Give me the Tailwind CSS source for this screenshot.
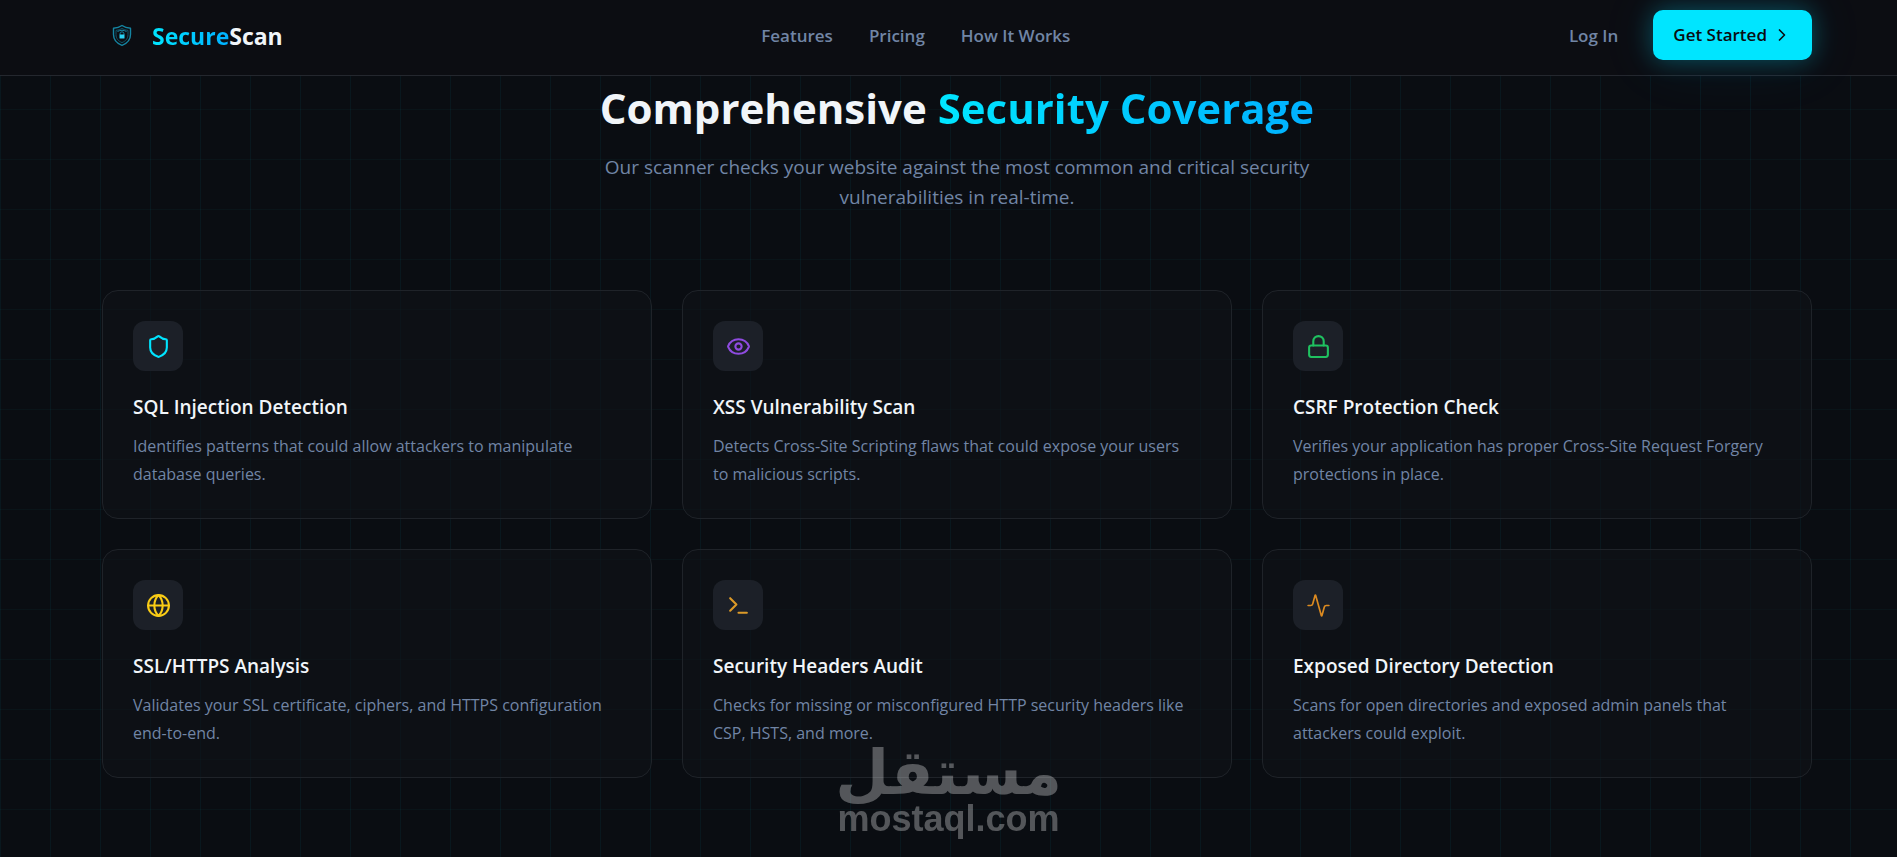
<!DOCTYPE html>
<html lang="en">
<head>
  <meta charset="UTF-8">
  <meta name="viewport" content="width=device-width, initial-scale=1.0" />
  <title>SecureScan</title>
  <!-- Tailwind CSS -->
  <script src="https://cdn.jsdelivr.net/npm/@tailwindcss/browser@4"></script>
</head>
<body class="relative min-h-screen overflow-x-hidden bg-[#0a0d12] bg-[linear-gradient(to_right,#00e5ff0d_1px,transparent_1px),linear-gradient(to_bottom,#00e5ff08_1px,transparent_1px)] bg-[size:50px_50px] bg-[position:0_9px] font-['Open_Sans',sans-serif] text-[#f1f5f9]">

<!-- Top bar -->
<header class="relative flex items-center justify-between border-b border-[#24272e] bg-[#0c0d12] pt-[10px] pr-[85px] pb-[13px] pl-[102px]">
  <a href="#" class="flex items-center gap-[10px] text-[23px] font-bold">
    <svg class="size-10" viewBox="0 0 40 40" fill="none" stroke="#1585a3" stroke-width="1.4" stroke-linejoin="round">
      <path d="M20 9.500c2.400 1.700 5.200 2.500 8.500 2.700v6.300c0 5.200-3.200 8.800-8.500 10.800-5.300-2-8.500-5.600-8.500-10.800v-6.300c3.300-.2 6.100-1 8.500-2.700z"/>
      <path d="M20 12.500c1.800 1.100 3.700 1.700 6 1.900v4.300c0 3.700-2.200 6.300-6 7.900-3.800-1.600-6-4.200-6-7.900v-4.300c2.300-.2 4.200-.8 6-1.900z" stroke="#0f566b" stroke-width="1"/>
      <path d="M15.500 15.500c2.800-1.600 6.200-1.600 9 0M18 19v-1.200a2 2 0 0 1 4 0V19" stroke-width="1"/>
      <rect x="17.500" y="18.500" width="5" height="4" rx=".6" fill="#2bd4f5" stroke="none"/>
    </svg>
    <span><span class="bg-gradient-to-r from-[#00e5ff] to-[#00b0ff] bg-clip-text text-transparent">Secure</span>Scan</span>
  </a>

  <nav class="flex items-center gap-9 text-[17px] font-semibold text-[#7185a5]">
    <a href="#features">Features</a>
    <a href="#pricing">Pricing</a>
    <a href="#how">How It Works</a>
  </nav>

  <div class="flex h-[52px] items-center gap-[15px] text-[17px] font-semibold">
    <a href="#login" class="px-5 text-[#7185a5]">Log In</a>
    <button type="button" class="flex h-[50px] items-center gap-[5px] self-start rounded-[10px] bg-[#00e5ff] px-5 text-[#0a0d12] shadow-[0_0_25px_#00e5ff4d,0_0_60px_#00b0ff1a]">
      Get Started
      <svg class="size-5" viewBox="0 0 24 24" fill="none" stroke="currentColor" stroke-width="2" stroke-linecap="round" stroke-linejoin="round"><path d="m9 18 6-6-6-6"/></svg>
    </button>
  </div>
</header>

<!-- Features -->
<main id="features" class="pt-1 pr-[85px] pb-[78px] pl-[102px]">
  <div class="text-center">
    <h2 class="text-[42px] leading-[56px] font-bold">Comprehensive <span class="bg-gradient-to-r from-[#00e5ff] to-[#00b0ff] bg-clip-text text-transparent">Security Coverage</span></h2>
    <p class="mx-auto mt-4 max-w-[720px] text-[19px] leading-[30px] text-[#7185a5]">Our scanner checks your website against the most common and critical security vulnerabilities in real-time.</p>
  </div>

  <div class="mt-[78px] grid grid-cols-3 gap-[30px]">
    <article class="rounded-2xl border border-[#1f2329] bg-[#0f1217]/60 p-[30px]">
      <div class="flex size-[50px] items-center justify-center rounded-xl bg-[#1c2028] text-[#00e5ff]">
        <svg class="size-[25px]" viewBox="0 0 24 24" fill="none" stroke="currentColor" stroke-width="2" stroke-linecap="round" stroke-linejoin="round"><path d="M20 13c0 5-3.500 7.500-7.660 8.950a1 1 0 0 1-.67-.01C7.500 20.500 4 18 4 13V6a1 1 0 0 1 1-1c2 0 4.500-1.200 6.240-2.720a1.170 1.170 0 0 1 1.520 0C14.510 3.810 17 5 19 5a1 1 0 0 1 1 1z"/></svg>
      </div>
      <h3 class="mt-[21px] mb-[10px] text-[19px] leading-[30px] font-semibold">SQL Injection Detection</h3>
      <p class="pr-[10px] text-base leading-7 text-[#7185a5]">Identifies patterns that could allow attackers to manipulate database queries.</p>
    </article>

    <article class="rounded-2xl border border-[#1f2329] bg-[#0f1217]/60 p-[30px]">
      <div class="flex size-[50px] items-center justify-center rounded-xl bg-[#1c2028] text-[#8f4be0]">
        <svg class="size-[25px]" viewBox="0 0 24 24" fill="none" stroke="currentColor" stroke-width="2" stroke-linecap="round" stroke-linejoin="round"><path d="M2.062 12.348a1 1 0 0 1 0-.696 10.750 10.750 0 0 1 19.876 0 1 1 0 0 1 0 .696 10.750 10.750 0 0 1-19.876 0"/><circle cx="12" cy="12" r="3"/></svg>
      </div>
      <h3 class="mt-[21px] mb-[10px] text-[19px] leading-[30px] font-semibold">XSS Vulnerability Scan</h3>
      <p class="pr-[10px] text-base leading-7 text-[#7185a5]">Detects Cross-Site Scripting flaws that could expose your users to malicious scripts.</p>
    </article>

    <article class="rounded-2xl border border-[#1f2329] bg-[#0f1217]/60 p-[30px]">
      <div class="flex size-[50px] items-center justify-center rounded-xl bg-[#1c2028] text-[#1fc160]">
        <svg class="size-[25px]" viewBox="0 0 24 24" fill="none" stroke="currentColor" stroke-width="2" stroke-linecap="round" stroke-linejoin="round"><rect x="3" y="11" width="18" height="11" rx="2"/><path d="M7 11V7a5 5 0 0 1 10 0v4"/></svg>
      </div>
      <h3 class="mt-[21px] mb-[10px] text-[19px] leading-[30px] font-semibold">CSRF Protection Check</h3>
      <p class="pr-[10px] text-base leading-7 text-[#7185a5]">Verifies your application has proper Cross-Site Request Forgery protections in place.</p>
    </article>

    <article class="rounded-2xl border border-[#1f2329] bg-[#0f1217]/60 p-[30px]">
      <div class="flex size-[50px] items-center justify-center rounded-xl bg-[#1c2028] text-[#facc15]">
        <svg class="size-[25px]" viewBox="0 0 24 24" fill="none" stroke="currentColor" stroke-width="2" stroke-linecap="round" stroke-linejoin="round"><circle cx="12" cy="12" r="10"/><path d="M12 2a14.500 14.500 0 0 0 0 20 14.500 14.500 0 0 0 0-20"/><path d="M2 12h20"/></svg>
      </div>
      <h3 class="mt-[21px] mb-[10px] text-[19px] leading-[30px] font-semibold">SSL/HTTPS Analysis</h3>
      <p class="pr-[10px] text-base leading-7 text-[#7185a5]">Validates your SSL certificate, ciphers, and HTTPS configuration end-to-end.</p>
    </article>

    <article class="rounded-2xl border border-[#1f2329] bg-[#0f1217]/60 p-[30px]">
      <div class="flex size-[50px] items-center justify-center rounded-xl bg-[#1c2028] text-[#dc9a28]">
        <svg class="size-[25px]" viewBox="0 0 24 24" fill="none" stroke="currentColor" stroke-width="2" stroke-linecap="round" stroke-linejoin="round"><path d="M12 19h8"/><path d="m4 17 6-6-6-6"/></svg>
      </div>
      <h3 class="mt-[21px] mb-[10px] text-[19px] leading-[30px] font-semibold">Security Headers Audit</h3>
      <p class="pr-[10px] text-base leading-7 text-[#7185a5]">Checks for missing or misconfigured HTTP security headers like CSP, HSTS, and more.</p>
    </article>

    <article class="rounded-2xl border border-[#1f2329] bg-[#0f1217]/60 p-[30px]">
      <div class="flex size-[50px] items-center justify-center rounded-xl bg-[#1c2028] text-[#dc8a20]">
        <svg class="size-[25px]" viewBox="0 0 24 24" fill="none" stroke="currentColor" stroke-width="1.600" stroke-linecap="round" stroke-linejoin="round"><path d="M22 12h-2.480a2 2 0 0 0-1.930 1.460l-2.350 8.360a.25.25 0 0 1-.48 0L9.240 2.180a.25.25 0 0 0-.48 0l-2.350 8.360A2 2 0 0 1 4.490 12H2"/></svg>
      </div>
      <h3 class="mt-[21px] mb-[10px] text-[19px] leading-[30px] font-semibold">Exposed Directory Detection</h3>
      <p class="pr-[10px] text-base leading-7 text-[#7185a5]">Scans for open directories and exposed admin panels that attackers could exploit.</p>
    </article>
  </div>
</main>

<!-- Watermark -->
<div class="pointer-events-none absolute inset-x-0 bottom-5 text-center font-bold text-white opacity-30">
  <div lang="ar" dir="rtl" class="font-['DejaVu_Sans',sans-serif] text-[62px] leading-[56px]">مستقل</div>
  <div class="font-['Liberation_Sans',sans-serif] text-[36px] leading-[36px]">mostaql.com</div>
</div>
</body>
</html>
